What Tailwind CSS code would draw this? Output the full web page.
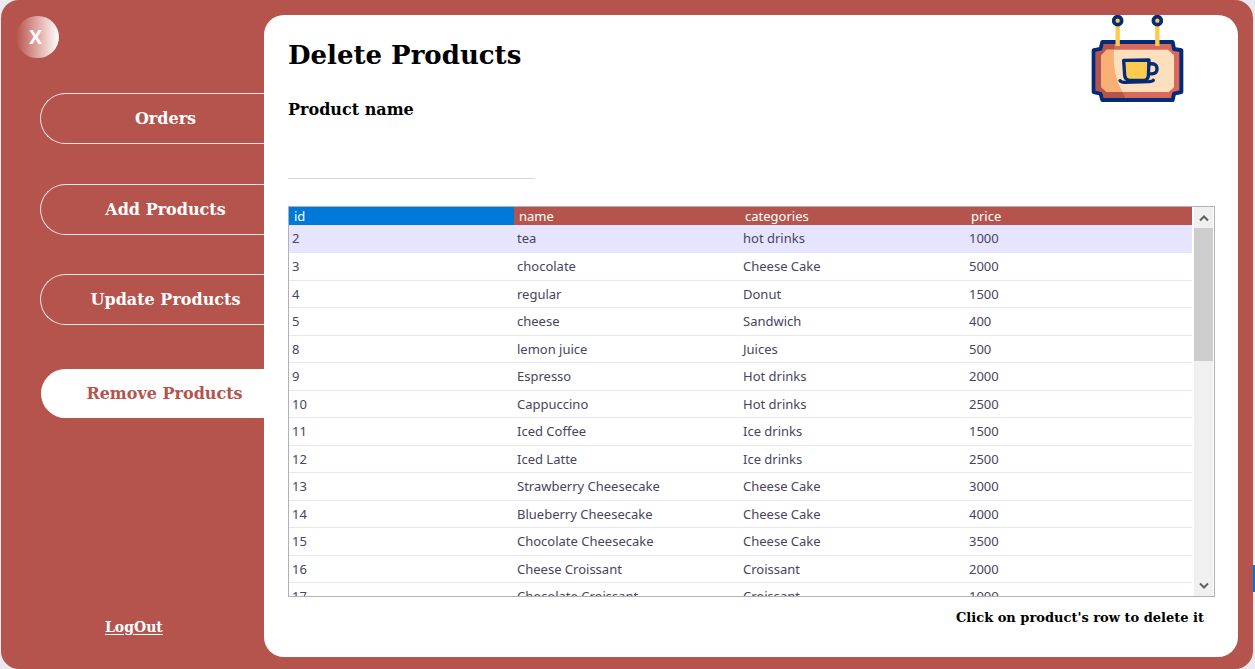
<!DOCTYPE html>
<html lang="en">
<head>
<meta charset="utf-8">
<meta name="viewport" content="width=device-width, initial-scale=1">
<title>Delete Products</title>
<script src="https://cdn.jsdelivr.net/npm/@tailwindcss/browser@4"></script>
</head>
<body class="relative h-screen overflow-hidden bg-[#e9eaf0] pl-px pr-[2px] font-['DejaVu_Serif',serif]">
<div class="absolute right-0 top-[565px] h-[27px] w-[2px] bg-[#0078d7]"></div>
<div class="relative flex h-full rounded-[18px] bg-[#b5544d] pt-[15px] pr-[15px] pb-3">
  <aside class="flex w-[263px] shrink-0 flex-col">
    <button type="button" aria-label="Close" class="mt-px ml-[15px] h-[42px] w-[43px] shrink-0 rounded-full bg-linear-to-r from-[#b5544d] to-white pr-1 text-center font-['Open_Sans',sans-serif] text-[19px] leading-[42px] font-bold text-white">X</button>
    <nav class="mt-[35px] flex flex-col gap-10 pl-[39px] text-[16px] font-bold text-white">
      <button type="button" class="h-[51px] rounded-l-full border border-r-0 border-[#f6e4e2] pl-[26px]">Orders</button>
      <button type="button" class="h-[51px] rounded-l-full border border-r-0 border-[#f6e4e2] pl-[26px]">Add Products</button>
      <button type="button" class="-mt-px h-[51px] rounded-l-full border border-r-0 border-[#f6e4e2] pl-[26px]">Update Products</button>
      <button type="button" aria-current="page" class="mt-1 ml-px h-[49px] rounded-l-full bg-white pl-[24px] text-[#b5544d]">Remove Products</button>
    </nav>
    <a href="#" class="mt-auto mb-5 ml-[104px] self-start text-[14px] leading-5 font-bold text-white underline underline-offset-2">LogOut</a>
  </aside>
  <main class="flex min-w-0 flex-1 flex-col rounded-[20px] bg-white pr-[23px] pl-6">
    <header class="flex items-start justify-between pr-[30px]">
      <div>
        <h1 class="mt-5 text-[26px] leading-10 font-bold text-black">Delete Products</h1>
        <label for="product" class="mt-[23px] block text-[16px] leading-6 font-bold text-black">Product name</label>
      </div>
      <svg class="h-[88px] w-[95px]" viewBox="30 45 285 264" aria-hidden="true">
        <path d="M67 126H278L282 147L304 151V276L282 281L278 300H67L62 281L41 276V151L62 147Z" fill="#d9695b" stroke="#032b77" stroke-width="12" stroke-linejoin="round"/>
        <path d="M71 132H103Q96 220 136 294H71L67 277L47 272V156L67 151Z" fill="#b5544d"/>
        <path d="M80 149H264L282 166V262L266 276H80L64 262V166Z" fill="#fce0bd"/>
        <path d="M80 149H102Q97 225 128 276H80L64 262V166Z" fill="#f7af73"/>
        <path d="M113 74V138M232 74V138" stroke="#fdcb50" stroke-width="13"/>
        <circle cx="113" cy="62" r="12" fill="#fdcb50" stroke="#032b77" stroke-width="11"/>
        <circle cx="232" cy="62" r="12" fill="#fdcb50" stroke="#032b77" stroke-width="11"/>
        <path d="M131 181L207 180L205 229Q202 241 193 241H147Q135 238 134 226Z" fill="#fdcb50" stroke="#032b77" stroke-width="10" stroke-linejoin="round"/>
        <path d="M208 192Q231 188 231 207Q231 224 207 221M120 242Q123 247 134 247L207 245Q218 244 220 241" fill="none" stroke="#032b77" stroke-width="10" stroke-linecap="round"/>
      </svg>
    </header>
    <input id="product" type="text" class="mt-[27px] h-[30px] w-[247px] border-b border-[#d3d9df] bg-white text-[14px] outline-none">
    <div class="mt-[27px] flex min-h-0 flex-1 border border-[#b0b0b8] font-['Noto_Sans',sans-serif] text-[13px]">
      <div class="min-w-0 flex-1 overflow-hidden">
        <table class="w-full table-fixed border-collapse text-left text-[#47455c]">
          <thead class="h-[18px] bg-[#b5544d] leading-[18px] text-white">
            <tr class="*:p-0 *:pl-[5px] *:font-normal"><th scope="col" class="w-[225px] bg-[#0078d7]">id</th><th scope="col">name</th><th scope="col">categories</th><th scope="col">price</th></tr>
          </thead>
          <tbody class="leading-5 *:border-b *:border-[#e7e4fd] *:odd:h-[27px] *:even:h-[28px] *:first:bg-[#e7e4ff] [&_td]:p-0 [&_td]:pl-[3px]">
            <tr><td>2</td><td>tea</td><td>hot drinks</td><td>1000</td></tr>
            <tr><td>3</td><td>chocolate</td><td>Cheese Cake</td><td>5000</td></tr>
            <tr><td>4</td><td>regular</td><td>Donut</td><td>1500</td></tr>
            <tr><td>5</td><td>cheese</td><td>Sandwich</td><td>400</td></tr>
            <tr><td>8</td><td>lemon juice</td><td>Juices</td><td>500</td></tr>
            <tr><td>9</td><td>Espresso</td><td>Hot drinks</td><td>2000</td></tr>
            <tr><td>10</td><td>Cappuccino</td><td>Hot drinks</td><td>2500</td></tr>
            <tr><td>11</td><td>Iced Coffee</td><td>Ice drinks</td><td>1500</td></tr>
            <tr><td>12</td><td>Iced Latte</td><td>Ice drinks</td><td>2500</td></tr>
            <tr><td>13</td><td>Strawberry Cheesecake</td><td>Cheese Cake</td><td>3000</td></tr>
            <tr><td>14</td><td>Blueberry Cheesecake</td><td>Cheese Cake</td><td>4000</td></tr>
            <tr><td>15</td><td>Chocolate Cheesecake</td><td>Cheese Cake</td><td>3500</td></tr>
            <tr><td>16</td><td>Cheese Croissant</td><td>Croissant</td><td>2000</td></tr>
            <tr><td>17</td><td>Chocolate Croissant</td><td>Croissant</td><td>1000</td></tr>
          </tbody>
        </table>
      </div>
      <div class="ml-[2px] mr-px flex w-[19px] flex-col bg-[#f0f0f0]">
        <button type="button" aria-label="Scroll up" class="flex h-[21px] items-center justify-center"><svg class="h-2 w-[10px]" viewBox="0 0 10 8" fill="none" stroke="#606060" stroke-width="2"><path d="M1 6.5L5 2.500L9 6.500"/></svg></button>
        <div class="h-[133px] bg-[#cdcdcd]"></div>
        <button type="button" aria-label="Scroll down" class="mt-auto flex h-[21px] items-center justify-center"><svg class="h-2 w-[10px]" viewBox="0 0 10 8" fill="none" stroke="#606060" stroke-width="2"><path d="M1 1.500L5 5.500L9 1.500"/></svg></button>
      </div>
    </div>
    <p class="mt-[11px] mb-[29px] pr-[11px] text-right text-[13px] leading-5 font-bold text-black">Click on product's row to delete it</p>
  </main>
</div>
</body>
</html>
